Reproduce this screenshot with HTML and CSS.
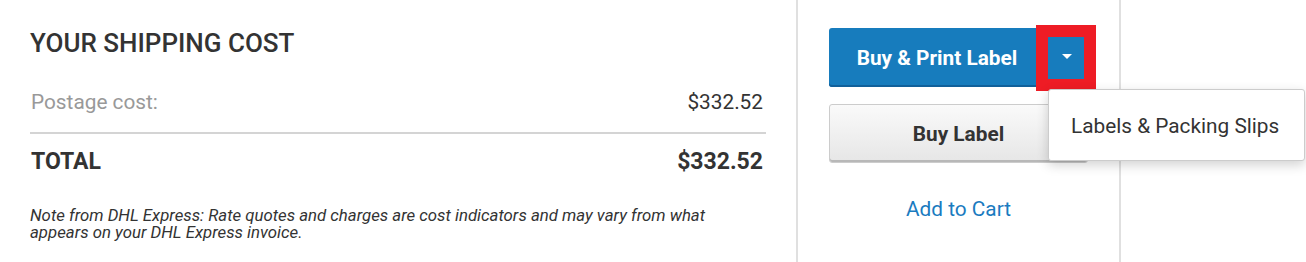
FILE: index.html
```html
<!DOCTYPE html>
<html>
<head>
<meta charset="utf-8">
<link rel="stylesheet" href="styles.css">
</head>
<body>
<div class="page">
  <section class="summary">
    <h2 class="title">YOUR SHIPPING COST</h2>
    <div class="row row-postage">
      <span>Postage cost:</span>
      <span class="amount">$332.52</span>
    </div>
    <div class="row row-total">
      <span>TOTAL</span>
      <span>$332.52</span>
    </div>
    <p class="note">Note from DHL Express: Rate quotes and charges are cost indicators and may vary from what appears on your DHL Express invoice.</p>
  </section>
  <section class="actions">
    <div class="split">
      <button class="btn-primary">Buy &amp; Print Label</button>
      <button class="btn-toggle"><span class="caret"></span></button>
      <div class="highlight"></div>
      <div class="menu">
        <div class="menu-item">Labels &amp; Packing Slips</div>
      </div>
    </div>
    <button class="btn-secondary">Buy Label</button>
    <a class="cart-link" href="#">Add to Cart</a>
  </section>
  <section class="rest"></section>
</div>
</body>
</html>
```
FILE: styles.css
```css
html, body {
  margin: 0;
  padding: 0;
  background: #fff;
}
body {
  font-family: Roboto, "Liberation Sans", Arial, sans-serif;
  color: #333;
  width: 1306px;
  height: 262px;
  overflow: hidden;
}
.page {
  display: flex;
  height: 262px;
}
.summary {
  width: 736px;
  padding: 0 30px;
  border-right: 2px solid #e0e0e0;
  flex: none;
}
.title {
  margin: 0;
  padding-top: 28px;
  font-size: 26px;
  line-height: 30px;
  font-weight: 500;
  color: #333;
}
.row {
  display: flex;
  justify-content: space-between;
  padding-left: 1px;
  padding-right: 3px;
}
.row-postage {
  margin-top: 31px;
  font-size: 20.8px;
  line-height: 26px;
  color: #999;
  padding-bottom: 17px;
  border-bottom: 2px solid #d4d4d4;
}
.row-postage .amount {
  color: #333;
}
.row-total {
  margin-top: 14px;
  font-size: 23px;
  line-height: 28px;
  font-weight: 700;
  color: #333;
}
.note {
  margin: 31px 0 0 0;
  max-width: 720px;
  font-size: 16.8px;
  line-height: 17px;
  font-style: italic;
  color: #333;
}
.actions {
  width: 259px;
  padding: 0 31px;
  border-right: 2px solid #e0e0e0;
  flex: none;
  display: flex;
  flex-direction: column;
}
.split {
  position: relative;
  display: flex;
  margin-top: 28px;
  height: 59px;
}
.btn-primary {
  flex: 1;
  border: none;
  margin: 0;
  border-radius: 3px 0 0 3px;
  background: #177cbd;
  box-shadow: inset 0 -2px 0 #11609a;
  color: #fff;
  font-family: inherit;
  font-size: 20.8px;
  font-weight: 700;
  padding: 0 0 0 8px;
}
.btn-toggle {
  width: 51px;
  border: none;
  margin: 0;
  border-radius: 0 3px 3px 0;
  background: #177cbd;
  box-shadow: inset 0 -2px 0 #11609a;
  padding: 0;
  display: flex;
  align-items: center;
  justify-content: center;
}
.caret {
  display: block;
  width: 0;
  height: 0;
  border-left: 5px solid transparent;
  border-right: 5px solid transparent;
  border-top: 5px solid #fff;
  margin-left: 8px;
  margin-bottom: 2px;
}
.highlight {
  position: absolute;
  left: 207px;
  top: -3px;
  width: 36px;
  height: 42px;
  border: 12px solid #ee1c25;
}
.menu {
  position: absolute;
  left: 219px;
  top: 61px;
  width: 255px;
  height: 70px;
  background: #fff;
  border: 1px solid #ccc;
  border-radius: 3px;
  box-shadow: 0 4px 12px rgba(0, 0, 0, 0.18);
  display: flex;
  align-items: center;
  z-index: 2;
}
.menu-item {
  padding-left: 22px;
  font-size: 20.8px;
  color: #333;
  padding-top: 1px;
}
.btn-secondary {
  margin-top: 17px;
  height: 59px;
  border: 1px solid #ccc;
  border-radius: 3px;
  background: linear-gradient(#fafafa, #e6e6e6);
  box-shadow: inset 0 -2px 0 #b8b8b8;
  font-family: inherit;
  font-size: 20.8px;
  font-weight: 700;
  color: #333;
  padding: 0;
}
.cart-link {
  margin-top: 34px;
  text-align: center;
  font-size: 20.8px;
  line-height: 24px;
  color: #1a7bbf;
  text-decoration: none;
}
.rest {
  flex: 1;
}
```
